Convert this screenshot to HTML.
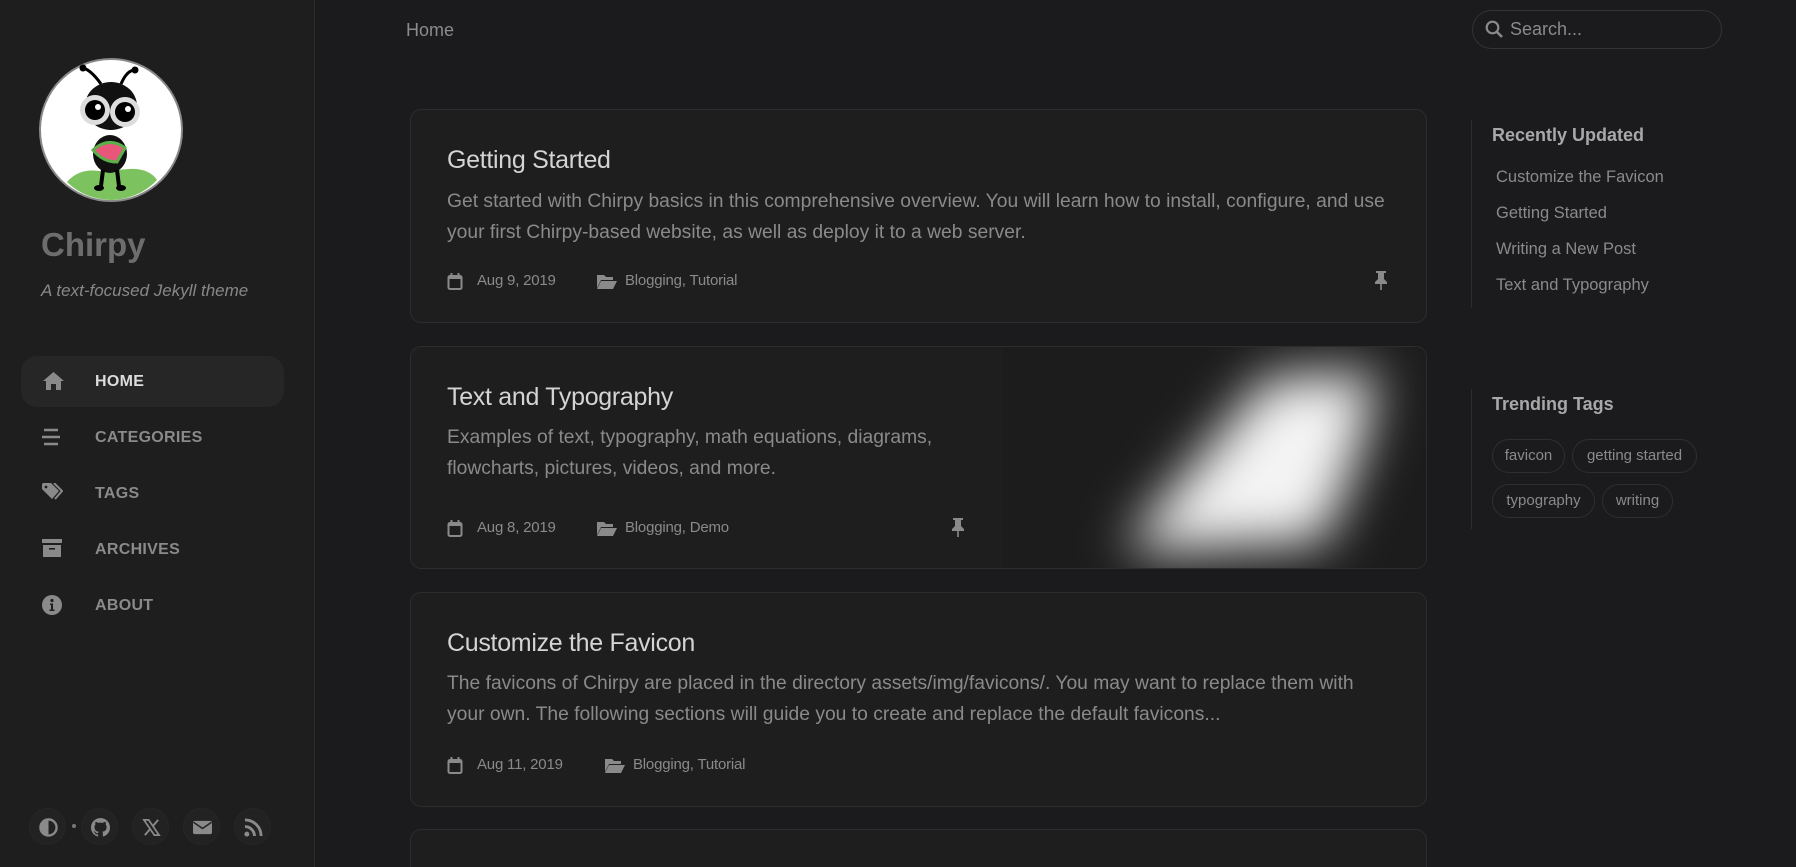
<!DOCTYPE html>
<html><head><meta charset="utf-8">
<style>
*{margin:0;padding:0;box-sizing:border-box}
html,body{width:1796px;height:867px;overflow:hidden;background:#1b1b1e;font-family:"Liberation Sans",sans-serif;position:relative}
.abs{position:absolute}
#side{position:absolute;left:0;top:0;width:315px;height:867px;background:#1e1e1e;border-right:1px solid #2c2c2c}
.nav{position:absolute;left:21px;width:263px;height:51px;border-radius:16px}
.nav .t{position:absolute;left:74px;top:0;line-height:51px;font-size:16px;font-weight:bold;color:#8a8a8a;letter-spacing:.3px}
.nav svg{position:absolute;left:21px;top:15px}
.soc{position:absolute;top:808px;width:37px;height:37px;border-radius:50%;background:#222;border:1px solid #262626}
.soc svg{position:absolute;left:9px;top:9px}
.card{position:absolute;left:410px;width:1017px;background:#1e1e1e;border:1px solid #2c2d2d;border-radius:11px;overflow:hidden}
.ttl{position:absolute;left:36px;font-size:25px;color:#d4d4d4;white-space:nowrap;letter-spacing:-.3px}
.dsc{position:absolute;left:36px;font-size:19.3px;line-height:31px;color:#8a8a8a;white-space:nowrap}
.meta{position:absolute;left:36px;font-size:15px;color:#8a8a8a;white-space:nowrap;letter-spacing:-.2px}
.meta span{position:absolute;top:0}
.ru{position:absolute;left:1496px;font-size:16.5px;color:#8a8a8a;white-space:nowrap}
.tag{position:absolute;height:34px;line-height:32px;border:1px solid #2f2f2f;border-radius:17px;font-size:15px;color:#8a8a8a;text-align:center}
</style></head><body>
<div id="side">
  <svg class="abs" style="left:39px;top:58px" width="144" height="144" viewBox="0 0 144 144">
    <circle cx="72" cy="72" r="71" fill="#fff" stroke="#888" stroke-width="2"/>
    <path d="M28 124 Q40 110 60 113 L90 111 Q110 110 118 122 Q100 141 72 142 Q45 141 28 124Z" fill="#7cc25e"/>
    <path d="M62 26 Q52 12 44 10 M82 26 Q88 12 96 12" stroke="#000" stroke-width="3" fill="none"/>
    <circle cx="44" cy="10" r="3.5" fill="#000"/><circle cx="96" cy="12" r="3.5" fill="#000"/>
    <ellipse cx="72" cy="48" rx="26" ry="24" fill="#111"/>
    <circle cx="56" cy="52" r="15" fill="#ddd"/><circle cx="86" cy="54" r="15" fill="#ddd"/>
    <circle cx="56" cy="52" r="10" fill="#000"/><circle cx="86" cy="54" r="10" fill="#000"/>
    <circle cx="59" cy="49" r="3" fill="#fff"/><circle cx="89" cy="51" r="3" fill="#fff"/>
    <ellipse cx="71" cy="96" rx="17" ry="19" fill="#111"/>
    <path d="M54 92 Q70 78 86 90 L78 104 Q64 104 54 92Z" fill="#e8577a" stroke="#5bb04a" stroke-width="3"/>
    <path d="M64 112 L62 128 M78 112 L80 128" stroke="#000" stroke-width="4"/>
    <ellipse cx="60" cy="130" rx="5" ry="3" fill="#000"/><ellipse cx="82" cy="130" rx="5" ry="3" fill="#000"/>
  </svg>
  <div class="abs" style="left:41px;top:226px;font-size:33px;font-weight:bold;color:#6d6d6d">Chirpy</div>
  <div class="abs" style="left:41px;top:281px;font-size:17px;font-style:italic;color:#888">A text-focused Jekyll theme</div>

  <div class="nav" style="top:356px;background:#262626">
    <svg width="23" height="20" viewBox="0 0 23 20"><path d="M11.5 1 L22 10 L19 10 L19 19 L14 19 L14 13 L9 13 L9 19 L4 19 L4 10 L1 10Z" fill="#8a8a8a"/></svg>
    <div class="t" style="color:#dcdcdc">HOME</div>
  </div>
  <div class="nav" style="top:412px">
    <svg width="20" height="20" viewBox="0 0 20 20"><path d="M2 3h14M0 10h18M2 17h14" stroke="#8a8a8a" stroke-width="2.4"/></svg>
    <div class="t">CATEGORIES</div>
  </div>
  <div class="nav" style="top:468px">
    <svg width="21" height="20" viewBox="0 0 21 20"><path d="M0 2 Q0 0 2 0 L9 0 L17 8 L10 16 L0 6Z" fill="#8a8a8a"/><circle cx="4" cy="4" r="1.4" fill="#1e1e1e"/><path d="M12 0 L20 8 L13 16" stroke="#8a8a8a" stroke-width="2" fill="none"/></svg>
    <div class="t">TAGS</div>
  </div>
  <div class="nav" style="top:524px">
    <svg width="20" height="20" viewBox="0 0 20 20"><rect x="0" y="0" width="20" height="4" fill="#8a8a8a"/><rect x="1" y="6" width="18" height="12" fill="#8a8a8a"/><rect x="7" y="9" width="6" height="1.6" fill="#1e1e1e"/></svg>
    <div class="t">ARCHIVES</div>
  </div>
  <div class="nav" style="top:580px">
    <svg width="20" height="20" viewBox="0 0 20 20"><circle cx="10" cy="10" r="10" fill="#8a8a8a"/><circle cx="10" cy="5.5" r="1.6" fill="#1e1e1e"/><path d="M8 8.5h3v6h1.5v1.5h-5v-1.5h1.5v-4.5h-1z" fill="#1e1e1e"/></svg>
    <div class="t">ABOUT</div>
  </div>

  <div class="soc" style="left:29px"><svg width="19" height="19" viewBox="0 0 20 20"><circle cx="10" cy="10" r="8.5" fill="none" stroke="#8a8a8a" stroke-width="2.5"/><path d="M10 1.5 A8.5 8.5 0 0 0 10 18.5Z" fill="#8a8a8a"/></svg></div>
  <div class="abs" style="left:72px;top:824px;width:4px;height:4px;border-radius:50%;background:#777"></div>
  <div class="soc" style="left:81px"><svg width="19" height="19" viewBox="0 0 16 16"><path fill="#8a8a8a" d="M8 0C3.58 0 0 3.580 0 8c0 3.54 2.29 6.530 5.47 7.59.4.07.55-.17.55-.38 0-.19-.01-.82-.01-1.49-2.01.37-2.530-.49-2.690-.94-.09-.23-.48-.94-.82-1.13-.28-.15-.68-.52-.01-.53.63-.01 1.080.58 1.230.82.72 1.210 1.870.87 2.330.66.07-.52.28-.87.51-1.07-1.78-.2-3.640-.89-3.640-3.95 0-.87.31-1.59.82-2.15-.08-.2-.36-1.020.08-2.120 0 0 .67-.21 2.200.82.64-.18 1.320-.27 2-.27.68 0 1.360.09 2 .27 1.530-1.040 2.200-.82 2.200-.82.44 1.100.16 1.920.08 2.120.51.56.82 1.270.82 2.150 0 3.070-1.870 3.750-3.650 3.950.29.25.54.73.54 1.480 0 1.070-.01 1.930-.01 2.200 0 .21.15.46.55.38A8.013 8.013 0 0016 8c0-4.420-3.580-8-8-8z"/></svg></div>
  <div class="soc" style="left:132px"><svg width="19" height="19" viewBox="0 0 20 20"><path d="M2 2h5l11 16h-5Z" fill="none" stroke="#8a8a8a" stroke-width="1.8"/><path d="M17 2L11 9M3 18l6-7" stroke="#8a8a8a" stroke-width="2"/></svg></div>
  <div class="soc" style="left:183px"><svg width="19" height="19" viewBox="0 0 20 20"><rect x="0" y="3" width="20" height="14" rx="2" fill="#8a8a8a"/><path d="M0.5 4.5 L10 11 L19.5 4.5" stroke="#222" stroke-width="1.6" fill="none"/></svg></div>
  <div class="soc" style="left:234px"><svg width="19" height="19" viewBox="0 0 20 20"><circle cx="3" cy="17" r="2.6" fill="#8a8a8a"/><path d="M1 9a10 10 0 0 1 10 10M1 2a17 17 0 0 1 17 17" stroke="#8a8a8a" stroke-width="3" fill="none"/></svg></div>
</div>

<div class="abs" style="left:406px;top:20px;font-size:18px;color:#8b8b8b">Home</div>
<div class="abs" style="left:1472px;top:10px;width:250px;height:39px;border:1px solid #333;border-radius:20px">
  <svg class="abs" style="left:12px;top:9px" width="18" height="18" viewBox="0 0 18 18"><circle cx="7.5" cy="7.5" r="5.8" fill="none" stroke="#8a8a8a" stroke-width="2.2"/><path d="M12 12l5 5" stroke="#8a8a8a" stroke-width="2.6"/></svg>
  <div class="abs" style="left:37px;top:8px;font-size:18px;color:#8a8a8a">Search...</div>
</div>

<div class="card" style="top:109px;height:214px">
  <div class="ttl" style="top:36px">Getting Started</div>
  <div class="dsc" style="top:76px">Get started with Chirpy basics in this comprehensive overview. You will learn how to install, configure, and use<br>your first Chirpy-based website, as well as deploy it to a web server.</div>
  <div class="meta" style="top:162px">
    <svg class="abs" style="left:0;top:1px" width="16" height="17" viewBox="0 0 16 17"><rect x="1.5" y="3" width="13" height="13" rx="1.5" fill="none" stroke="#8a8a8a" stroke-width="2"/><rect x="1.5" y="3" width="13" height="3" fill="#8a8a8a"/><path d="M4.5 0v4M11.5 0v4" stroke="#8a8a8a" stroke-width="2"/></svg>
    <span style="left:30px">Aug 9, 2019</span>
    <svg class="abs" style="left:150px;top:2px" width="20" height="15" viewBox="0 0 20 15"><path d="M0 1h7l2 2h7v3H4L0 14Z" fill="#8a8a8a"/><path d="M4 7h16l-4 8H0Z" fill="#8a8a8a"/></svg>
    <span style="left:178px">Blogging, Tutorial</span>
  </div>
  <svg class="abs" style="left:963px;top:161px" width="14" height="20" viewBox="0 0 14 20"><path d="M2 0h10v2h-2v6l3 3v2H1v-2l3-3V2H2z" fill="#8a8a8a"/><path d="M7 13v6" stroke="#8a8a8a" stroke-width="1.6"/></svg>
</div>

<div class="card" style="top:346px;height:223px">
  <svg class="abs" style="left:592px;top:0" width="425" height="223"><defs><filter id="b" x="-50%" y="-50%" width="200%" height="200%"><feGaussianBlur stdDeviation="26"/></filter></defs><rect width="425" height="223" fill="#1c1c1c"/><polygon points="265,30 375,26 355,110 320,195 130,205 130,190" fill="#f4f4f4" filter="url(#b)"/></svg>
  <div class="ttl" style="top:36px">Text and Typography</div>
  <div class="dsc" style="top:75px">Examples of text, typography, math equations, diagrams,<br>flowcharts, pictures, videos, and more.</div>
  <div class="meta" style="top:172px">
    <svg class="abs" style="left:0;top:1px" width="16" height="17" viewBox="0 0 16 17"><rect x="1.5" y="3" width="13" height="13" rx="1.5" fill="none" stroke="#8a8a8a" stroke-width="2"/><rect x="1.5" y="3" width="13" height="3" fill="#8a8a8a"/><path d="M4.5 0v4M11.5 0v4" stroke="#8a8a8a" stroke-width="2"/></svg>
    <span style="left:30px">Aug 8, 2019</span>
    <svg class="abs" style="left:150px;top:2px" width="20" height="15" viewBox="0 0 20 15"><path d="M0 1h7l2 2h7v3H4L0 14Z" fill="#8a8a8a"/><path d="M4 7h16l-4 8H0Z" fill="#8a8a8a"/></svg>
    <span style="left:178px">Blogging, Demo</span>
  </div>
  <svg class="abs" style="left:540px;top:171px" width="14" height="20" viewBox="0 0 14 20"><path d="M2 0h10v2h-2v6l3 3v2H1v-2l3-3V2H2z" fill="#8a8a8a"/><path d="M7 13v6" stroke="#8a8a8a" stroke-width="1.6"/></svg>
</div>

<div class="card" style="top:592px;height:215px">
  <div class="ttl" style="top:36px">Customize the Favicon</div>
  <div class="dsc" style="top:75px">The favicons of Chirpy are placed in the directory assets/img/favicons/. You may want to replace them with<br>your own. The following sections will guide you to create and replace the default favicons...</div>
  <div class="meta" style="top:163px">
    <svg class="abs" style="left:0;top:1px" width="16" height="17" viewBox="0 0 16 17"><rect x="1.5" y="3" width="13" height="13" rx="1.5" fill="none" stroke="#8a8a8a" stroke-width="2"/><rect x="1.5" y="3" width="13" height="3" fill="#8a8a8a"/><path d="M4.5 0v4M11.5 0v4" stroke="#8a8a8a" stroke-width="2"/></svg>
    <span style="left:30px">Aug 11, 2019</span>
    <svg class="abs" style="left:158px;top:2px" width="20" height="15" viewBox="0 0 20 15"><path d="M0 1h7l2 2h7v3H4L0 14Z" fill="#8a8a8a"/><path d="M4 7h16l-4 8H0Z" fill="#8a8a8a"/></svg>
    <span style="left:186px">Blogging, Tutorial</span>
  </div>
</div>

<div class="card" style="top:829px;height:38px;border-bottom:none;border-radius:11px 11px 0 0"></div>

<div class="abs" style="left:1471px;top:120px;width:1px;height:188px;background:#2c2c2c"></div>
<div class="abs" style="left:1492px;top:125px;font-size:18px;font-weight:bold;color:#a8a8a8">Recently Updated</div>
<div class="ru" style="top:168px">Customize the Favicon</div>
<div class="ru" style="top:204px">Getting Started</div>
<div class="ru" style="top:240px">Writing a New Post</div>
<div class="ru" style="top:276px">Text and Typography</div>

<div class="abs" style="left:1471px;top:389px;width:1px;height:140px;background:#2c2c2c"></div>
<div class="abs" style="left:1492px;top:394px;font-size:18px;font-weight:bold;color:#a8a8a8">Trending Tags</div>
<div class="tag" style="left:1492px;top:439px;width:73px">favicon</div>
<div class="tag" style="left:1572px;top:439px;width:125px">getting started</div>
<div class="tag" style="left:1492px;top:484px;width:103px">typography</div>
<div class="tag" style="left:1602px;top:484px;width:71px">writing</div>
</body></html>
